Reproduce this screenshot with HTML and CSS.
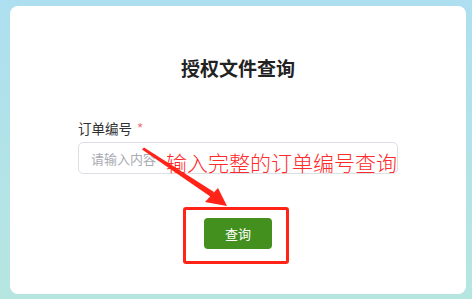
FILE: index.html
```html
<!DOCTYPE html>
<html lang="zh-CN">
<head>
    <meta charset="UTF-8">
    <meta name="viewport" content="width=device-width, initial-scale=1.0">
    <title>授权文件查询</title>
    <link rel="stylesheet" href="styles.css">
</head>
<body>
    <div class="page">
        <div class="card">
            <h1 class="title">授权文件查询</h1>

            <div class="form-item">
                <label class="form-label">订单编号<span class="required">*</span></label>
                <input class="form-input" type="text" placeholder="请输入内容">
            </div>

            <div class="actions">
                <button class="query-button">查询</button>
            </div>

            <!-- 标注 -->
            <div class="note-text">输入完整的订单编号查询</div>
            <div class="note-box"></div>
            <svg class="note-arrow" width="472" height="299" viewBox="0 0 472 299">
                <polygon points="142,149.5 144,147.5 214,192 211,197" fill="#ff2318"/>
                <polygon points="218,188 227,206 205,202" fill="#ff2318"/>
            </svg>
        </div>
    </div>
</body>
</html>
```

FILE: styles.css
```css
* {
    margin: 0;
    padding: 0;
    box-sizing: border-box;
}

body {
    font-family: "Noto Sans CJK SC", "Liberation Sans", sans-serif;
    background: linear-gradient(180deg, #aedff0, #b6e6e0);
    color: #303133;
    width: 472px;
    height: 299px;
    overflow: hidden;
}

.page {
    padding: 6px 6px 5px 10px;
    height: 100%;
}

.card {
    position: relative;
    background: #fff;
    border-radius: 8px;
    height: 288px;
    padding: 50px 68px 0 68px;
    display: flex;
    flex-direction: column;
}

.title {
    font-size: 19px;
    line-height: 24px;
    font-weight: bold;
    text-align: center;
    color: #222;
}

.form-item {
    margin-top: 38px;
    display: flex;
    flex-direction: column;
    gap: 4px;
}

.form-label {
    font-size: 13.5px;
    line-height: 20px;
    color: #303133;
}

.required {
    color: #f56c6c;
    margin-left: 5px;
}

.form-input {
    width: 320px;
    height: 32px;
    border: 1px solid #dcdfe6;
    border-radius: 5px;
    padding: 0 12px;
    font-family: inherit;
    font-size: 13px;
    color: #606266;
    outline: none;
}

.form-input::placeholder {
    color: #a8abb2;
}

.actions {
    margin-top: 44px;
    display: flex;
    justify-content: center;
}

.query-button {
    width: 68px;
    height: 31px;
    border: none;
    border-radius: 4px;
    background: #43901f;
    color: #fff;
    font-family: inherit;
    font-size: 13px;
    cursor: pointer;
}

.note-text {
    position: absolute;
    left: 156px;
    top: 144px;
    font-size: 21px;
    font-weight: 300;
    line-height: 24px;
    color: #ff2a2a;
    white-space: nowrap;
}

.note-box {
    position: absolute;
    left: 173px;
    top: 201px;
    width: 106px;
    height: 57px;
    border: 3px solid #ff2318;
    border-radius: 3px;
}

.note-arrow {
    position: absolute;
    left: -10px;
    top: -6px;
    pointer-events: none;
}
```
